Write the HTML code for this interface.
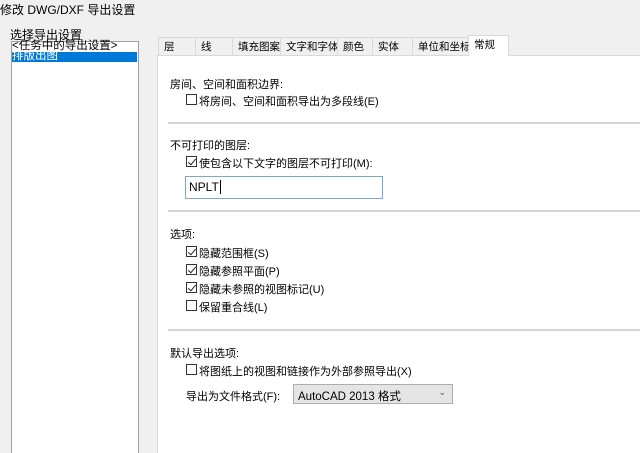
<!DOCTYPE html>
<html style="width:640px;height:453px;overflow:hidden"><head><meta charset="utf-8"><style>
*{margin:0;padding:0;box-sizing:border-box}
body{width:640px;height:453px;background:#f0f0f0;position:relative;overflow:hidden;font-family:"Liberation Sans","Noto Sans CJK SC",sans-serif;font-size:11px;color:#000}
.a{position:absolute;white-space:nowrap}
.tab{position:absolute;top:37px;height:18px;border:1px solid #d9d9d9;border-bottom:none;background:#f0f0f0;padding:1px 0 0 5px;font-size:10.5px;white-space:nowrap;overflow:hidden}
.sep{position:absolute;left:168px;right:0;height:2px;background:#d5d5d5}
.cb{position:absolute;width:11px;height:11px;border:1px solid #333;background:#fff}
.cb.c::after{content:"";position:absolute;left:3px;top:0px;width:3px;height:7px;border:solid #222;border-width:0 1.3px 1.3px 0;transform:rotate(40deg)}
</style></head><body>
<div class="a" style="left:0;top:1px;font-size:12px">修改 DWG/DXF 导出设置</div>
<div class="a" style="left:10px;top:26px;font-size:12px">选择导出设置</div>
<div class="a" style="left:11px;top:41px;width:128px;height:412px;background:#fff;border:1px solid #a0a0a0;border-bottom:none"></div>
<div class="a" style="left:12px;top:41px;font-size:11.5px;line-height:11px">&lt;任务中的导出设置&gt;</div>
<div class="a" style="left:12px;top:52px;width:125px;height:10px;background:#0078d7"></div>
<div class="a" style="left:12px;top:51px;color:#fff;font-size:11.5px;line-height:11px">排版出图</div>
<div class="a" style="left:157px;top:55px;width:483px;height:398px;background:#fff;border:1px solid #d9d9d9;border-right:none;border-bottom:none"></div>
<div class="tab" style="left:158px;width:38px">层</div>
<div class="tab" style="left:195px;width:38px">线</div>
<div class="tab" style="left:232px;width:49px">填充图案</div>
<div class="tab" style="left:280px;width:58px">文字和字体</div>
<div class="tab" style="left:337px;width:36px">颜色</div>
<div class="tab" style="left:372px;width:41px">实体</div>
<div class="tab" style="left:412px;width:57px">单位和坐标</div>
<div class="tab" style="left:468px;top:35px;height:21px;width:41px;background:#fff;z-index:2">常规</div>
<div class="a" style="left:170px;top:76px">房间、空间和面积边界:</div>
<div class="cb" style="left:186px;top:94px"></div><div class="a" style="left:199px;top:93px">将房间、空间和面积导出为多段线(E)</div>
<div class="sep" style="top:122px"></div>
<div class="a" style="left:170px;top:137px">不可打印的图层:</div>
<div class="cb c" style="left:186px;top:156px"></div><div class="a" style="left:199px;top:155px">使包含以下文字的图层不可打印(M):</div>
<div class="a" style="left:185px;top:176px;width:198px;height:23px;border:1px solid #7aa7d0;background:#fff;padding:3px 0 0 3px;font-size:12px">NPLT<span style="border-left:1px solid #000;margin-left:1px"></span></div>
<div class="sep" style="top:210px"></div>
<div class="a" style="left:170px;top:226px">选项:</div>
<div class="cb c" style="left:186px;top:246px"></div><div class="a" style="left:199px;top:245px">隐藏范围框(S)</div>
<div class="cb c" style="left:186px;top:264px"></div><div class="a" style="left:199px;top:263px">隐藏参照平面(P)</div>
<div class="cb c" style="left:186px;top:282px"></div><div class="a" style="left:199px;top:281px">隐藏未参照的视图标记(U)</div>
<div class="cb" style="left:186px;top:300px"></div><div class="a" style="left:199px;top:299px">保留重合线(L)</div>
<div class="sep" style="top:329px"></div>
<div class="a" style="left:170px;top:345px">默认导出选项:</div>
<div class="cb" style="left:186px;top:364px"></div><div class="a" style="left:199px;top:363px">将图纸上的视图和链接作为外部参照导出(X)</div>
<div class="a" style="left:186px;top:388px">导出为文件格式(F):</div>
<div class="a" style="left:293px;top:384px;width:160px;height:20px;background:#e5e5e5;border:1px solid #adadad;padding:3px 0 0 4px;font-size:11.5px">AutoCAD 2013 格式<span style="position:absolute;right:6px;top:2px;font-size:9px;color:#555">&#8964;</span></div>
</body></html>
